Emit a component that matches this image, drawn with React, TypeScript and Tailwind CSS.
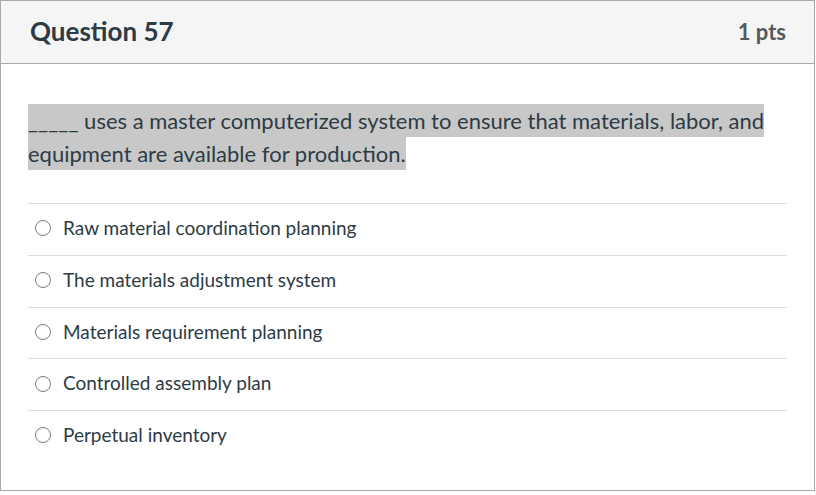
const answers = [
  "Raw material coordination planning",
  "The materials adjustment system",
  "Materials requirement planning",
  "Controlled assembly plan",
  "Perpetual inventory",
];

export default function App() {
  return (
    <div className="w-[816px] h-[495px] bg-white" style={{ fontFamily: "Lato, 'Noto Sans', sans-serif" }}>
      <div className="w-[815px] h-[491px] border border-[#a9a9a9] flex flex-col">
        {/* Header */}
        <div className="h-[63px] bg-[#f5f5f5] border-b border-[#a9a9a9] flex items-center justify-between pl-[29px] pr-[28px] shrink-0">
          <h2 className="text-[26px] font-bold text-[#2d3b45] leading-none pb-[2px]">Question 57</h2>
          <span className="text-[22px] font-bold text-[#555a5d] leading-none">1 pts</span>
        </div>

        {/* Body */}
        <div className="px-[27px] pt-[40px]">
          <p className="text-[22px] leading-[33px] text-[#2d3b45]">
            <span className="bg-[#c8c8c8] py-[3.3px]">
              _____ uses a master computerized system to ensure that materials, labor, and equipment are available for production.
            </span>
          </p>

          <div className="mt-[33px]">
            {answers.map((a) => (
              <label key={a} className="border-t border-[#dcdcdc] h-[51.75px] flex items-center pb-[2px] cursor-pointer">
                <span className="ml-[7px] w-[16px] h-[16px] rounded-full border border-[#7d7d7d] bg-white shrink-0" />
                <span className="ml-[12px] text-[19px] text-[#2d3b45]">{a}</span>
              </label>
            ))}
          </div>
        </div>
      </div>
    </div>
  );
}
